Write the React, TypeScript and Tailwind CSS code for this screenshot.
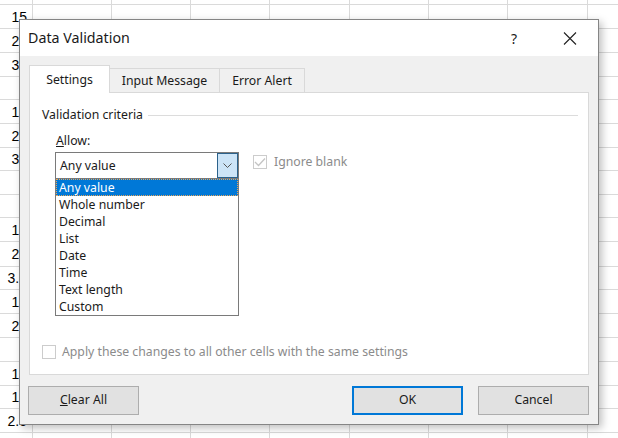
import { useState } from "react"

const rowHeights = [5, 24, 24, 24, 23, 24, 24, 23, 24, 23, 24, 25, 23, 24, 24, 24, 24, 23, 24, 6]
const colWidths = [33, 79, 79, 79, 80, 79, 79, 80, 79]
const colA = ["", "15", "20", "30", "", "10", "25", "30", "", "", "12", "25", "3.5", "10", "20", "", "10", "12", "2.5", ""]

const options = ["Any value", "Whole number", "Decimal", "List", "Date", "Time", "Text length", "Custom"]

function Sheet() {
  return (
    <div
      className="grid bg-white text-[14px] text-black"
      style={{
        gridTemplateColumns: colWidths.map((w) => `${w}px`).join(" "),
        gridTemplateRows: rowHeights.map((h) => `${h}px`).join(" "),
        fontFamily: '"Liberation Sans", Arial, sans-serif',
      }}
    >
      {rowHeights.map((_, r) =>
        colWidths.map((_, c) => (
          <div
            key={`${r}-${c}`}
            className="border-b border-r border-[#dadada] flex items-center justify-end pr-[5px] overflow-hidden leading-none"
          >
            {c === 0 ? colA[r] : ""}
          </div>
        ))
      )}
    </div>
  )
}

function Checkbox({ checked }: { checked?: boolean }) {
  return (
    <div className="w-[14px] h-[14px] border border-[#cccccc] bg-white flex items-center justify-center">
      {checked && (
        <svg width="12" height="10" viewBox="0 0 12 10">
          <path d="M1 5 L4.5 8.5 L11 1.5" fill="none" stroke="#c4c4c4" strokeWidth="1.3" />
        </svg>
      )}
    </div>
  )
}

function Button({ children, primary }: { children: React.ReactNode; primary?: boolean }) {
  return (
    <button
      className={`w-[111px] h-[29px] bg-[#e1e1e1] text-[12.25px] text-[#1a1a1a] ${
        primary ? "border-2 border-[#0078d7]" : "border border-[#adadad]"
      }`}
    >
      {children}
    </button>
  )
}

export default function App() {
  const [selected] = useState(0)

  return (
    <div className="relative w-[618px] h-[438px] overflow-hidden bg-white">
      <Sheet />

      <div
        className="absolute left-[19px] top-[19px] w-[580px] h-[406px] border border-[#858585] flex flex-col shadow-[3px_3px_8px_rgba(0,0,0,0.25)] text-[#1a1a1a]"
        style={{ fontFamily: '"Noto Sans", "Open Sans", sans-serif' }}
      >
        <div className="h-[36px] bg-white flex items-center pl-[8px]">
          <span className="text-[14.25px]">Data Validation</span>
          <span className="ml-auto w-[20px] text-center text-[14px]">?</span>
          <svg className="ml-[39px] mr-[21px]" width="14" height="13" viewBox="0 0 14 13">
            <path d="M1 0.5 L13 12.5 M13 0.5 L1 12.5" stroke="#222" strokeWidth="1.1" />
          </svg>
        </div>

        <div className="flex-1 bg-[#f0f0f0] px-[9px] flex flex-col">
          <div className="flex items-end mt-[9px] text-[12.25px]">
            <div className="relative z-10 -mb-px w-[81px] h-[28px] pt-[2px] bg-white border border-b-0 border-[#d9d9d9] flex items-center justify-center">
              Settings
            </div>
            <div className="w-[110px] h-[24px] pt-[2px] border-t border-r border-[#d9d9d9] flex items-center justify-center">
              Input Message
            </div>
            <div className="w-[85px] h-[24px] pt-[2px] border-t border-r border-[#d9d9d9] flex items-center justify-center">
              Error Alert
            </div>
          </div>

          <div className="h-[283px] bg-white border border-[#d9d9d9] flex flex-col text-[12.25px]">
            <div className="mt-[14px] h-[16px] flex items-center pl-[12px] pr-[10px] gap-[5px]">
              <span>Validation criteria</span>
              <div className="flex-1 h-px bg-[#dcdcdc]" />
            </div>

            <div className="mt-[10px] h-[16px] flex items-center pl-[26px]">
              <span>
                <span className="underline">A</span>llow:
              </span>
            </div>

            <div className="mt-[3px] flex items-start pl-[25px]">
              <div className="relative w-[184px] h-[27px] border border-[#7a7a7a] bg-white flex items-center">
                <span className="pl-[4px] pt-px">Any value</span>
                <div className="ml-auto mr-0 w-[21px] h-full bg-[#cce4f7] border border-[#2c628b] flex items-center justify-center">
                  <svg width="9" height="5" viewBox="0 0 9 5">
                    <path d="M0.5 0.5 L4.5 4.5 L8.5 0.5" fill="none" stroke="#555" strokeWidth="1" />
                  </svg>
                </div>

                <div className="absolute left-[-1px] top-[25px] w-[184px] border border-[#7a7a7a] bg-white z-20">
                  {options.map((o, i) => (
                    <div
                      key={o}
                      className={`h-[17px] flex items-center pl-[3px] pt-px leading-none ${
                        i === selected
                          ? "bg-[#0078d7] text-white outline-1 outline-dotted outline-[#e8a65a] -outline-offset-1"
                          : ""
                      }`}
                    >
                      {o}
                    </div>
                  ))}
                </div>
              </div>

              <div className="ml-[14px] mt-[1px] flex items-center gap-[7px] text-[#8b8b8b]">
                <Checkbox checked />
                <span>Ignore blank</span>
              </div>
            </div>

            <div className="mt-auto mb-[13px] flex items-center gap-[6px] pl-[12px] text-[#8b8b8b]">
              <Checkbox />
              <span>Apply these changes to all other cells with the same settings</span>
            </div>
          </div>

          <div className="mt-[11px] flex items-center -ml-px">
            <Button>
              <span className="underline">C</span>lear All
            </Button>
            <div className="ml-auto flex gap-[15px]">
              <Button primary>OK</Button>
              <Button>Cancel</Button>
            </div>
          </div>
        </div>
      </div>
    </div>
  )
}
